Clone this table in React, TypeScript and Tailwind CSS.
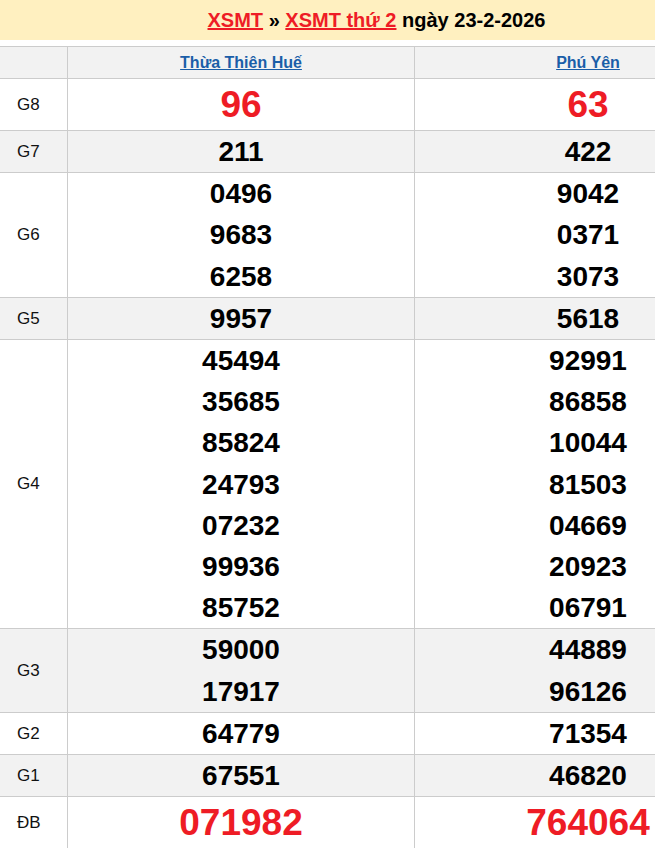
import React from "react";

type Row = { label: string; a: string[]; b: string[]; gray: boolean; big?: boolean };

const rows: Row[] = [
  { label: "G8", a: ["96"], b: ["63"], gray: false, big: true },
  { label: "G7", a: ["211"], b: ["422"], gray: true },
  { label: "G6", a: ["0496", "9683", "6258"], b: ["9042", "0371", "3073"], gray: false },
  { label: "G5", a: ["9957"], b: ["5618"], gray: true },
  {
    label: "G4",
    a: ["45494", "35685", "85824", "24793", "07232", "99936", "85752"],
    b: ["92991", "86858", "10044", "81503", "04669", "20923", "06791"],
    gray: false,
  },
  { label: "G3", a: ["59000", "17917"], b: ["44889", "96126"], gray: true },
  { label: "G2", a: ["64779"], b: ["71354"], gray: false },
  { label: "G1", a: ["67551"], b: ["46820"], gray: true },
  { label: "ĐB", a: ["071982"], b: ["764064"], gray: false, big: true },
];

function Cell({ nums, big }: { nums: string[]; big?: boolean }) {
  return (
    <div className="flex flex-col items-center justify-center border-l border-[#cccccc]">
      {nums.map((n) =>
        big ? (
          <div key={n} className="text-[37px] leading-[51px] font-bold text-[#ee1c25]">
            {n}
          </div>
        ) : (
          <div key={n} className="text-[28px] leading-[41.2px] font-bold text-black">
            {n}
          </div>
        )
      )}
    </div>
  );
}

export default function App() {
  return (
    <div
      className="w-[655px] h-[848px] overflow-hidden bg-white"
      style={{ fontFamily: '"Liberation Sans", Arial, sans-serif' }}
    >
      <div className="w-[761px]">
        <div className="h-[40px] bg-[#fff0c0] flex items-center justify-center text-[20px] font-bold text-black pr-[8px]">
          <span>
            <a className="text-[#ee1c25] underline">XSMT</a> »{" "}
            <a className="text-[#ee1c25] underline">XSMT thứ 2</a> ngày 23-2-2026
          </span>
        </div>
        <div className="h-[6px]" />
        <div className="grid grid-cols-[67px_347px_347px] border-t border-[#cccccc]">
          <div className="h-[31px] bg-[#f2f2f2]" />
          <div className="h-[31px] bg-[#f2f2f2] border-l border-[#cccccc] flex items-center justify-center">
            <a className="text-[16px] font-bold text-[#1a5ea8] underline">Thừa Thiên Huế</a>
          </div>
          <div className="h-[31px] bg-[#f2f2f2] border-l border-[#cccccc] flex items-center justify-center">
            <a className="text-[16px] font-bold text-[#1a5ea8] underline">Phú Yên</a>
          </div>
          {rows.map((r) => (
            <div
              key={r.label}
              className={`col-span-3 grid grid-cols-[67px_347px_347px] border-t border-[#cccccc] ${
                r.gray ? "bg-[#f2f2f2]" : "bg-white"
              }`}
            >
              <div className="flex items-center pl-[17px] text-[17px] text-[#111111]">{r.label}</div>
              <Cell nums={r.a} big={r.big} />
              <Cell nums={r.b} big={r.big} />
            </div>
          ))}
        </div>
      </div>
    </div>
  );
}
